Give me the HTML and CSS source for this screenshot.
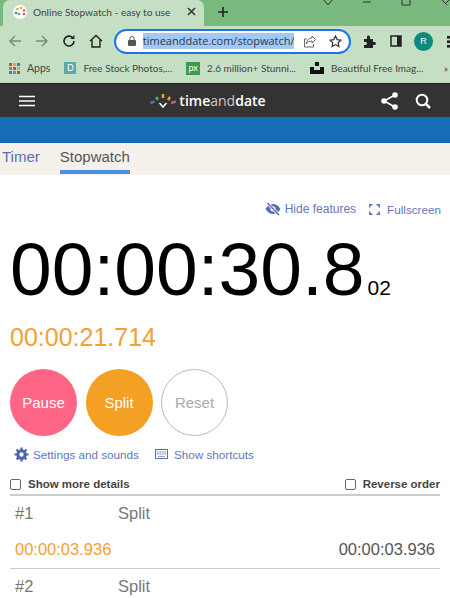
FILE: index.html
```html
<!DOCTYPE html>
<html lang="en">
  <head>
    <meta charset="UTF-8" />
    <title>Online Stopwatch - easy to use</title>
    <link rel="stylesheet" href="styles.css">
  </head>
  <body>
    <!-- browser chrome -->
    <div class="tabstrip">
      <div class="tab">
        <span class="favicon">
          <svg width="14" height="14" viewBox="0 0 14 14"><circle cx="3" cy="8" r="1.3" fill="#3d7cc9"/><circle cx="4.5" cy="4" r="1.3" fill="#e8a33d"/><circle cx="8" cy="3" r="1.3" fill="#e8a33d"/><circle cx="11" cy="5.5" r="1.3" fill="#e0507a"/><circle cx="11" cy="9" r="1.3" fill="#e0507a"/><circle cx="6" cy="9" r="1.3" fill="#5aa857"/></svg>
        </span>
        <span class="tabTitle">Online Stopwatch - easy to use</span>
        <span class="tabClose">
          <svg width="9" height="9" viewBox="0 0 9 9"><path d="M1 1l7 7M8 1l-7 7" stroke="#333" stroke-width="1.5"/></svg>
        </span>
      </div>
      <span class="newTab">
        <svg width="12" height="12" viewBox="0 0 12 12"><path d="M6 1v10M1 6h10" stroke="#222" stroke-width="1.6"/></svg>
      </span>
      <div class="winButtons">
        <svg width="10" height="6" viewBox="0 0 10 6"><path d="M1 0l4 5 4-5" fill="none" stroke="#333"/></svg>
        <svg width="10" height="6" viewBox="0 0 10 6"><path d="M1 2h8" stroke="#333"/></svg>
        <svg width="10" height="6" viewBox="0 0 10 6"><path d="M1 0v5h8V0" fill="none" stroke="#333"/></svg>
        <svg width="10" height="6" viewBox="0 0 10 6"><path d="M2 0l5 5M9 0L5 4" stroke="#333"/></svg>
      </div>
    </div>
    <div class="toolbar">
      <svg class="navIcon" width="14" height="14" viewBox="0 0 14 14"><path d="M13 7H2M7 2L2 7l5 5" fill="none" stroke="#7d8a80" stroke-width="1.5"/></svg>
      <svg class="navIcon" width="14" height="14" viewBox="0 0 14 14"><path d="M1 7h11M7 2l5 5-5 5" fill="none" stroke="#7d8a80" stroke-width="1.5"/></svg>
      <svg class="navIcon" width="14" height="14" viewBox="0 0 14 14"><path d="M12 7a5 5 0 1 1-1.500-3.500" fill="none" stroke="#222" stroke-width="1.600"/><path d="M12.500 1v4h-4z" fill="#222"/></svg>
      <svg class="navIcon" width="14" height="14" viewBox="0 0 14 14"><path d="M1 7l6-5.500L13 7M3 6v7h8V6" fill="none" stroke="#222" stroke-width="1.400"/></svg>
      <div class="omnibox">
        <svg width="8" height="10" viewBox="0 0 8 10"><rect y="4" width="8" height="6" rx="1" fill="#555"/><path d="M2 4V2.500a2 2 0 0 1 4 0V4" fill="none" stroke="#555"/></svg>
        <span class="url">timeanddate.com/stopwatch/</span>
        <svg class="shareIcon" width="13" height="13" viewBox="0 0 13 13"><path d="M9 1l3.500 3.500L9 8V6C6 6 4.500 7 3.500 9 3.500 6 5 3.500 9 3zM10.500 9v3h-9V4H4" fill="none" stroke="#666"/></svg>
        <svg width="13" height="13" viewBox="0 0 13 13"><path d="M6.500 1l1.700 3.600 3.800.5-2.800 2.600.7 3.800-3.400-1.900-3.400 1.900.7-3.800L1 5.100l3.800-.5z" fill="none" stroke="#333" stroke-width="1.200"/></svg>
      </div>
      <svg class="extIcon" width="13" height="13" viewBox="0 0 13 13"><path d="M1 4h3V2a1.500 1.500 0 0 1 3 0v2h3v3h1.500a1.500 1.500 0 0 1 0 3H10v3H1v-3h1.500a1.500 1.500 0 0 0 0-3H1z" fill="#222"/></svg>
      <svg class="extIcon" width="12" height="12" viewBox="0 0 12 12"><path d="M1 1h10v10H1z" fill="none" stroke="#222" stroke-width="1.500"/><path d="M7 1h4v10H7z" fill="#222"/></svg>
      <span class="avatar">R</span>
      <span class="kebab"></span>
    </div>
    <div class="bookmarks">
      <span class="mark">
        <svg width="11" height="11" viewBox="0 0 11 11"><path d="M0 0h3v3H0z" fill="#d9483b"/><path d="M4 0h3v3H4z" fill="#e8a33d"/><path d="M8 0h3v3H8z" fill="#3d7cc9"/><path d="M0 4h3v3H0z" fill="#5aa857"/><path d="M4 4h3v3H4z" fill="#d9483b"/><path d="M8 4h3v3H8z" fill="#e8a33d"/><path d="M0 8h3v3H0z" fill="#3d7cc9"/><path d="M4 8h3v3H4z" fill="#5aa857"/><path d="M8 8h3v3H8z" fill="#d9483b"/></svg>
        Apps
      </span>
      <span class="mark"><span class="pexels">D</span>Free Stock Photos,...</span>
      <span class="mark"><span class="pixabay">px</span>2.6 million+ Stunni...</span>
      <span class="mark">
        <svg width="14" height="12" viewBox="0 0 14 12"><path d="M5 0h4v4H5zM0 5h4v3h6V5h4v7H0z" fill="#111"/></svg>
        Beautiful Free Imag...
      </span>
      <span class="more">»</span>
    </div>

    <!-- site header -->
    <div class="navbar">
      <svg width="16" height="12" viewBox="0 0 16 12"><path d="M0 1.500h16M0 6h16M0 10.500h16" stroke="#fff" stroke-width="1.500"/></svg>
      <div class="logo">
        <svg width="27" height="16" viewBox="0 0 27 16"><path d="M0.500 10l4-1.500" stroke="#3d7cc9" stroke-width="2.500"/><path d="M6 4l2 3" stroke="#5aa857" stroke-width="2.500"/><path d="M13 1v4" stroke="#e8a33d" stroke-width="2.500"/><path d="M18 7l2-3" stroke="#e8a33d" stroke-width="2.500"/><path d="M21 10l5-1.500" stroke="#e0507a" stroke-width="2.500"/><path d="M9.500 10l3.500 4 3.500-4" fill="none" stroke="#fff" stroke-width="1.500"/></svg>
        <span class="logoText">time<span class="logoAnd">and</span>date</span>
      </div>
      <div class="navIcons">
        <svg width="17" height="18" viewBox="0 0 17 18"><path d="M14 3L3 9l11 6" fill="none" stroke="#fff" stroke-width="1.500"/><circle cx="14" cy="3" r="2.800" fill="#fff"/><circle cx="3" cy="9" r="2.800" fill="#fff"/><circle cx="14" cy="15" r="2.800" fill="#fff"/></svg>
        <svg width="16" height="16" viewBox="0 0 16 16"><circle cx="7" cy="7" r="5.300" fill="none" stroke="#fff" stroke-width="2"/><path d="M10.500 10.500L15 15" stroke="#fff" stroke-width="2.500"/></svg>
      </div>
    </div>
    <div class="blueBar"></div>
    <div class="tabs">
      <a class="siteTab">Timer</a>
      <a class="siteTab active">Stopwatch</a>
    </div>

    <!-- stopwatch -->
    <div class="container">
      <div class="features">
        <span class="link">
          <svg width="16" height="14" viewBox="0 0 16 14"><path d="M0.500 7C2.500 3.500 5 2 8 2s5.500 1.500 7.500 5c-2 3.500-4.500 5-7.500 5S2.500 10.500.5 7z" fill="#5a70b5"/><circle cx="8" cy="7" r="2.500" fill="#fff"/><path d="M2.500 1l11.500 12" stroke="#fff" stroke-width="3"/><path d="M2.500 1l11.500 12" stroke="#5a70b5" stroke-width="1.500"/></svg>
          Hide features
        </span>
        <span class="link wide">
          <svg width="11" height="11" viewBox="0 0 11 11"><path d="M.8 3.500V.8h2.700M7.500.8h2.700v2.700M10.200 7.500v2.700H7.500M3.500 10.200H.8V7.500" fill="none" stroke="#5a70b5" stroke-width="1.500"/></svg>
          Fullscreen
        </span>
      </div>
      <div class="clock">00:00:30.8<span class="clockSmall">02</span></div>
      <div class="lapClock">00:00:21.714</div>
      <div class="buttons">
        <span class="round pause">Pause</span>
        <span class="round split">Split</span>
        <span class="round reset">Reset</span>
      </div>
      <div class="settings">
        <span class="link">
          <svg width="15" height="15" viewBox="0 0 15 15"><circle cx="7.500" cy="7.500" r="3.700" fill="none" stroke="#4a64ad" stroke-width="3"/><path d="M7.500.5v14M.5 7.500h14M2.500 2.500l10 10M12.500 2.500l-10 10" stroke="#4a64ad" stroke-width="2.200" stroke-dasharray="2.500 9 2.500"/></svg>
          Settings and sounds
        </span>
        <span class="link shortcuts">
          <svg width="13" height="10" viewBox="0 0 13 10"><rect x=".5" y=".5" width="12" height="9" fill="none" stroke="#5a70b5"/><path d="M2 3h9M2 5h9M3 7.500h7" stroke="#5a70b5" stroke-dasharray="1 .6"/></svg>
          Show shortcuts
        </span>
      </div>
      <div class="options">
        <label class="option"><span class="check"></span>Show more details</label>
        <label class="option"><span class="check"></span>Reverse order</label>
      </div>
      <div class="lap">
        <div class="lapHead"><span class="lapNum">#1</span><span>Split</span></div>
        <div class="lapTimes"><span class="orange">00:00:03.936</span><span>00:00:03.936</span></div>
      </div>
      <div class="lap">
        <div class="lapHead"><span class="lapNum">#2</span><span>Split</span></div>
      </div>
    </div>
  </body>
</html>
```

FILE: styles.css
```css
html,
body {
  margin: 0;
  height: 598px;
  overflow: hidden;
}
body {
  font-family: "Liberation Sans", Arial, sans-serif;
  background-color: #ffffff;
  color: #333;
}

/* browser chrome */
.tabstrip {
  display: flex;
  height: 26px;
  background-color: #7ab97e;
}
.tab {
  display: flex;
  align-items: center;
  width: 201px;
  margin-left: 3px;
  padding: 0 0 3px 10px;
  box-sizing: border-box;
  background-color: #c5dfc4;
  border-radius: 7px 7px 0 0;
}
.favicon {
  display: flex;
  align-items: center;
  justify-content: center;
  width: 14px;
  height: 14px;
  background: #fff;
  border-radius: 50%;
  margin-right: 6px;
}
.tabTitle {
  font-family: Lato, sans-serif;
  font-size: 10.100px;
  color: #444;
  white-space: nowrap;
}
.tabClose {
  margin-left: auto;
  margin-right: 8px;
  display: flex;
}
.newTab {
  display: flex;
  align-items: center;
  margin-left: 13px;
  padding-bottom: 3px;
}
.winButtons {
  display: flex;
  margin-left: auto;
  gap: 29px;
  height: 6px;
}
.toolbar {
  display: flex;
  align-items: center;
  height: 30px;
  background-color: #c5dfc4;
  padding-left: 8px;
}
.navIcon {
  margin-right: 13px;
}
.omnibox {
  display: flex;
  align-items: center;
  width: 238px;
  height: 25px;
  margin-left: -2px;
  margin-right: 12px;
  padding-left: 12px;
  box-sizing: border-box;
  background: #fff;
  border: 2px solid #1a73e8;
  border-radius: 13px;
}
.url {
  font-family: "Open Sans", sans-serif;
  font-size: 11px;
  line-height: 16px;
  margin-left: 7px;
  width: 151px;
  overflow: hidden;
  white-space: nowrap;
  background-color: #a3c8f5;
  color: #2b3a4a;
}
.shareIcon {
  margin-left: 9px;
  margin-right: 13px;
}
.extIcon {
  margin-right: 14px;
}
.avatar {
  width: 19px;
  height: 19px;
  margin-left: -2px;
  border-radius: 50%;
  background: #0b8a7d;
  color: #fff;
  font-size: 9px;
  display: flex;
  align-items: center;
  justify-content: center;
}
.kebab {
  width: 3px;
  height: 13px;
  margin-left: 14px;
  background: radial-gradient(circle, #222 1.400px, transparent 1.500px) 0 0 / 3px 4.500px;
}
.bookmarks {
  display: flex;
  align-items: center;
  height: 24px;
  background-color: #c5dfc4;
  padding: 0 0 3px 9px;
  font-family: Lato, sans-serif;
  font-size: 10px;
  color: #444;
  white-space: nowrap;
  overflow: hidden;
}
.mark {
  display: flex;
  align-items: center;
  gap: 7px;
  margin-right: 14px;
}
.mark:first-child {
  font-size: 10.500px;
}
.pexels {
  width: 12px;
  height: 12px;
  background: #5aa9a6;
  color: #fff;
  font-size: 9px;
  text-align: center;
  line-height: 12px;
}
.pixabay {
  width: 14px;
  height: 13px;
  background: #3f9a4d;
  color: #fff;
  font-size: 9px;
  text-align: center;
  line-height: 12px;
}
.more {
  margin-left: auto;
  padding-right: 2px;
}

/* site header */
.navbar {
  display: flex;
  align-items: center;
  justify-content: space-between;
  height: 33px;
  padding: 0 19px;
  background-color: #333333;
  border-top: 1px solid #222;
}
.logo {
  display: flex;
  align-items: center;
  gap: 2px;
}
.logoText {
  font-family: "Open Sans", sans-serif;
  font-size: 14px;
  font-weight: 600;
  color: #fff;
}
.logoAnd {
  font-weight: 400;
  color: #c8c8c8;
}
.navIcons {
  display: flex;
  align-items: center;
  gap: 17px;
}
.blueBar {
  height: 26px;
  background-color: #166db5;
}
.tabs {
  display: flex;
  gap: 20px;
  height: 32px;
  padding-left: 2px;
  background-color: #f5f0ea;
}
.siteTab {
  font-size: 15px;
  line-height: 27px;
  color: #5a70b5;
}
.siteTab.active {
  color: #555;
  border-bottom: 4px solid #4a90e2;
  height: 27px;
}

/* stopwatch */
.container {
  padding: 0 10px;
}
.link {
  display: inline-flex;
  align-items: center;
  gap: 4px;
  font-size: 12px;
  color: #6477ba;
}
.wide {
  gap: 7px;
  font-size: 11.700px;
}
.features {
  display: flex;
  justify-content: flex-end;
  gap: 13px;
  padding-top: 24px;
  height: 20px;
  margin-right: -1px;
}
.clock {
  font-size: 75px;
  line-height: 60px;
  margin-top: 20px;
  color: #000;
  white-space: nowrap;
}
.clockSmall {
  font-size: 21px;
  margin-left: 3px;
}
.lapClock {
  font-size: 25px;
  line-height: 30px;
  margin-top: 4px;
  color: #f5a033;
}
.buttons {
  display: flex;
  gap: 8.500px;
  margin-top: 17px;
}
.round {
  display: flex;
  align-items: center;
  justify-content: center;
  width: 67px;
  height: 67px;
  box-sizing: border-box;
  border-radius: 50%;
  font-size: 15px;
  color: #fff;
}
.pause {
  background-color: #ff6584;
}
.split {
  background-color: #f4a025;
}
.reset {
  border: 1px solid #bbb;
  color: #aaa;
}
.settings {
  display: flex;
  gap: 16px;
  padding-left: 4px;
  margin-top: 9px;
  height: 18px;
}
.settings .link {
  font-size: 11.700px;
}
.settings .shortcuts {
  gap: 6px;
}
.options {
  display: flex;
  justify-content: space-between;
  margin-top: 15px;
  padding-bottom: 4px;
  border-bottom: 2px solid #ccc;
}
.option {
  display: flex;
  align-items: center;
  gap: 7px;
  font-size: 11.500px;
  font-weight: bold;
  color: #444;
}
.check {
  width: 9px;
  height: 9px;
  border: 1px solid #666;
  border-radius: 2px;
}
.lap {
  font-size: 16.500px;
  color: #777;
}
.lapHead {
  display: flex;
  height: 35px;
  align-items: center;
}
.lapNum {
  width: 5px;
  padding-left: 5px;
  margin-right: 98px;
}
.lapTimes {
  display: flex;
  justify-content: space-between;
  align-items: center;
  height: 37px;
  padding: 0 5px;
  border-bottom: 1px solid #ccc;
  color: #555;
}
.orange {
  color: #f5a033;
}
```
